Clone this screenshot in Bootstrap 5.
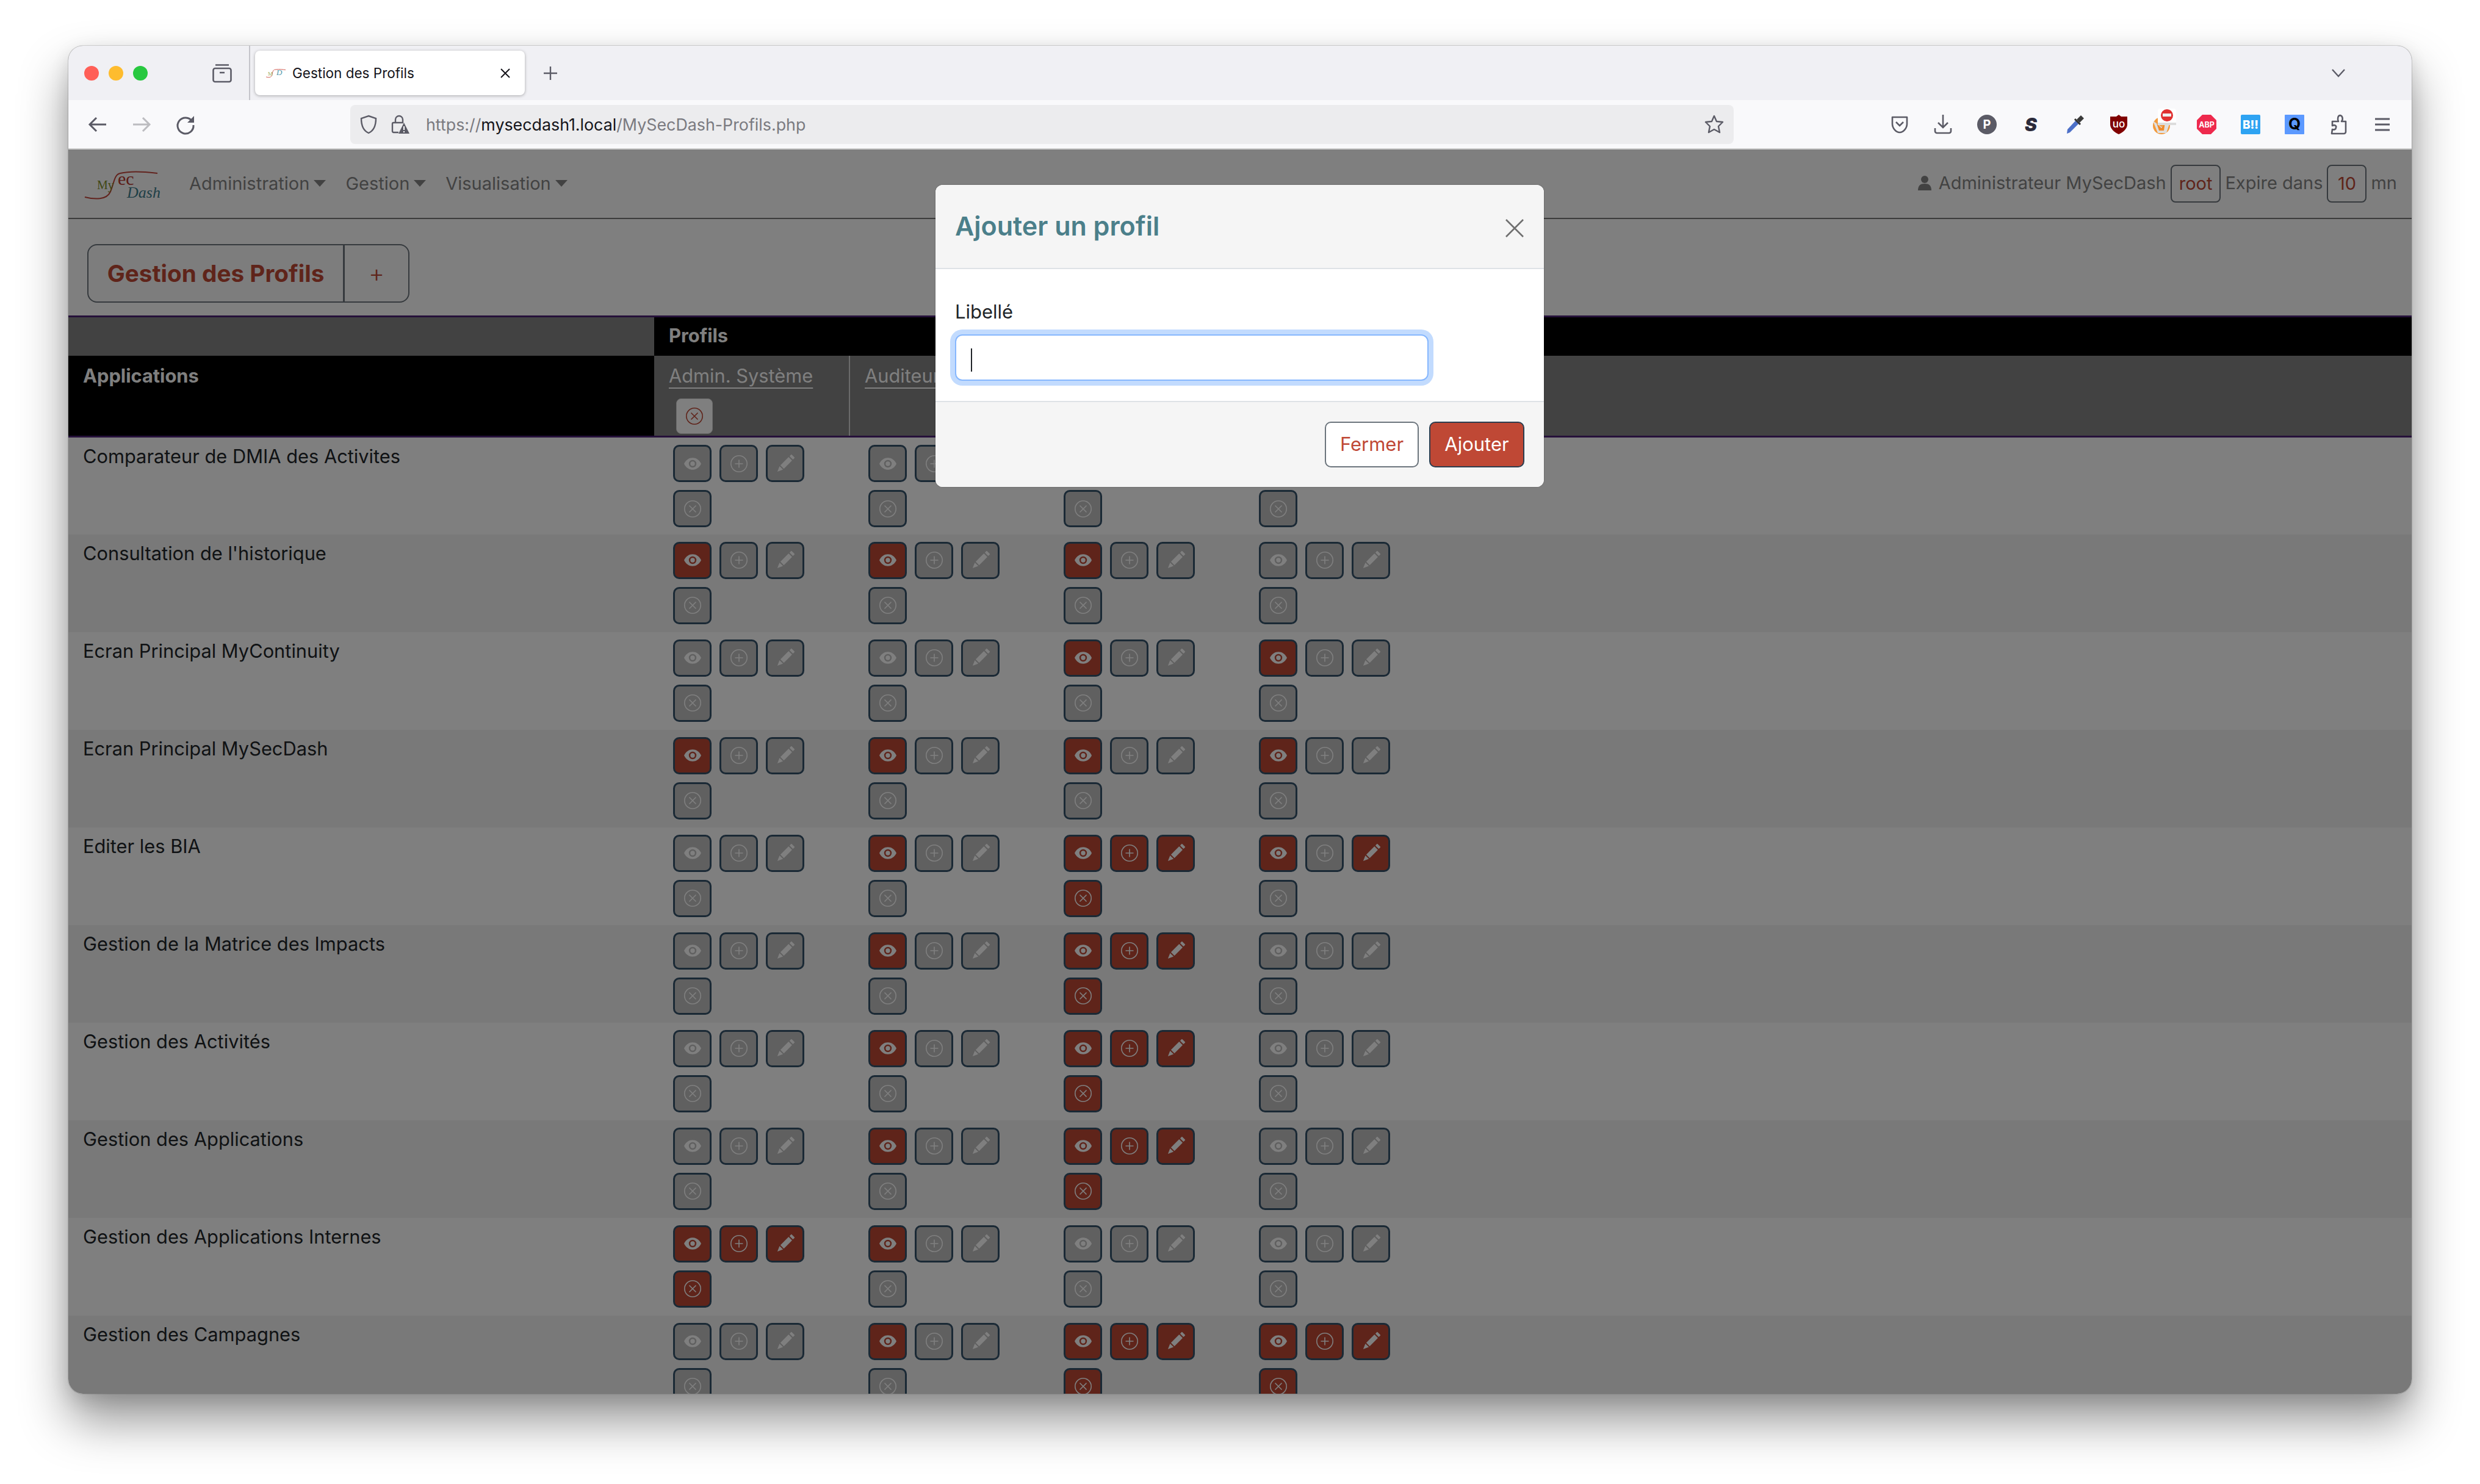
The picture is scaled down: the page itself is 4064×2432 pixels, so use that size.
<!DOCTYPE html>
<html lang="fr">
<head>
  <meta charset="UTF-8" />
  <title>Gestion des Profils</title>
  <link href="https://cdn.jsdelivr.net/npm/bootstrap@5.3.3/dist/css/bootstrap.min.css" rel="stylesheet" />
  <style>
    html, body { margin: 0; height: 2432px; overflow: hidden; background: #fff; font-family: Inter, "Liberation Sans", sans-serif; }
    svg { overflow: visible; }

    /* fenetre du navigateur */
    .fenetre { width: 3840px; height: 2209px; margin: 75px 0 0 112px; border-radius: 24px; overflow: hidden; background: #808080;
      box-shadow: 0 0 0 1px rgba(0,0,0,.14), 0 44px 80px rgba(0,0,0,.42), 0 10px 30px rgba(0,0,0,.12); }
    .barre-onglets { height: 89px; background: #f0f0f4; }
    .feu { width: 24px; height: 24px; border-radius: 50%; }
    .feu-rouge { background: #ff5f57; margin-left: 26px; }
    .feu-jaune { background: #febc2e; margin-left: 16px; }
    .feu-vert { background: #28c840; margin-left: 16px; }
    .ico-archive { margin-left: 106px; }
    .separateur { width: 2px; height: 89px; background: #c4c4ca; margin-left: 28px; }
    .onglet { width: 442px; height: 73px; margin-left: 8px; padding: 0 18px; background: #fff; border-radius: 8px; box-shadow: 0 1px 5px rgba(0,0,0,.3); font-size: 22.5px; color: #15141a; }
    .onglet-titre { margin-left: 11px; }
    .ico-nouvel { margin-left: 29px; }
    .ico-liste { margin-left: 2905px; }
    .barre-outils { height: 81px; background: #f9f9fb; border-bottom: 2px solid #ccc; padding: 0 32px; gap: 40px; }
    .zone-url { width: 2267px; height: 64px; margin-left: 214px; background: #ececee; border-radius: 8px; padding: 0 16px; font-size: 26.8px; color: #7a7a80; }
    .zone-url b { font-weight: 400; color: #15141a; }
    .zone-url svg + svg { margin-left: 23px; }
    .url-texte { margin-left: 27px; padding-top: 2px; }

    /* page */
    .page { position: relative; height: 2039px; overflow: hidden; background: #fff; font-size: 30.8px; line-height: 42px; color: #212529; }
    .voile { position: absolute; inset: 0; background: #000; opacity: .5; }
    .navbar.haut { height: 114px; padding: 0 24px 0 13px; background: #fff; border-bottom: 2px solid #787878; }
    .navbar-expand .navbar-nav .nav-link { padding: 0 16px; font-size: 29px; color: #858585; }
    .haut .navbar-nav { margin-left: 9px; }
    .haut .dropdown-toggle::after { margin-left: 7px; border-top-width: 11px; border-left-width: 10px; border-right-width: 10px; vertical-align: 5px; }
    .utilisateur { color: #858585; gap: 7px; margin-top: -2px; font-size: 29px; }
    .boite-info { height: 62px; min-width: 65px; padding: 0 12px; margin-top: 2px; border: 2px solid #6c757d; border-radius: 8px; color: #bf4835; display: flex; align-items: center; justify-content: center; }
    .entete-titre { padding: 41px 0 21px 31px; }
    .groupe-titre .btn { height: 96px; border: 2px solid #6c757d; border-radius: 16px; background: #fafafa; color: #bf4835; }
    .groupe-titre .btn-nom { width: 421px; font-size: 38.7px; font-weight: 700; padding: 0; }
    .groupe-titre .btn-plus { width: 108px; font-size: 40px; font-weight: 300; padding: 0; }

    /* tableau */
    .tableau { width: 3840px; table-layout: fixed; border-collapse: collapse; margin: 0; }
    .tableau th, .tableau td { vertical-align: top; font-weight: 400; padding: 0; }
    .tableau thead { border-top: 3px solid #4b2075; border-bottom: 3px solid #4b2075; color: #fff; }
    .col-app { width: 960px; }
    .col-profil { width: 320px; }
    .l1 th { height: 64px; background: #000; font-weight: 700; padding: 9px 24px 0; }
    .l1 th.vide { background: #848484; }
    .l2 th { height: 133px; background: #848484; padding: 12px 24px 0; }
    .l2 th.noir { background: #000; font-weight: 700; }
    .l2 th.sep { border-right: 2px solid #d6d6d6; }
    .l2 a { color: #fff; text-decoration: underline; text-underline-offset: 8px; text-decoration-thickness: 2px; }
    .suppr-profil { width: 60px; height: 58px; margin: 16px 0 0 12px; border-radius: 8px; background: #fff; border: 1px solid #d8d8d8; padding: 0; display: flex; align-items: center; justify-content: center; }
    .tableau tbody tr { height: 160px; background: #fff; }
    .tableau tbody tr:nth-child(even) { background: #f2f2f2; }
    .tableau td.nom-app { padding: 10px 24px; }
    .droits { width: 240px; margin: 12px 0 0 31px; display: flex; flex-wrap: wrap; gap: 13px; }
    .droit { width: 63px; height: 61px; padding: 0; border: 3px solid #35526a; border-radius: 10px; background: #c0c0c0; display: flex; align-items: center; justify-content: center; }
    .droit.actif { background: #bf4835; }

    /* fenetre modale */
    .boite-modale { position: absolute; left: 1421px; top: 58px; width: 997px; border: 0; border-radius: 12px; background: #fff; overflow: hidden; box-shadow: 0 0 2px rgba(0,0,0,.4); }
    .boite-modale .modal-header { height: 138px; padding: 0 24px 0 32px; background: #f5f5f5; border-bottom: 2px solid #dee2e6; }
    .boite-modale .modal-title { font-size: 43px; font-weight: 600; color: #4b7f8a; line-height: 1.2; }
    .fermeture { width: 32px; height: 32px; padding: 0; background: none; border: 0; margin: -10px 8px 0 0; }
    .boite-modale .modal-body { height: 216px; padding: 49px 32px 0; position: relative; }
    .boite-modale label { font-size: 31px; margin-bottom: 16px; display: block; line-height: 42px; }
    .saisie { width: 776px; height: 76px; border: 2px solid #86b7fe; border-radius: 12px; box-shadow: 0 0 0 8px #c2dbfe; }
    .curseur { position: absolute; left: 58px; top: 130px; width: 2px; height: 38px; background: #212529; }
    .boite-modale .modal-footer { height: 141px; padding: 0 32px; background: #f5f5f5; border-top: 2px solid #dee2e6; gap: 17px; }
    .boite-modale .modal-footer > .btn { margin: 0; height: 75px; font-size: 31px; border-radius: 10px; padding: 0; }
    .btn-fermer { width: 154px; background: #fff; color: #bf4835; border: 2px solid #6c757d; }
    .btn-ajouter { width: 156px; background: #bf4835; color: #fff; border: 2px solid #2c3e50; }
  </style>
</head>

<body>
<svg width="0" height="0" class="d-block">
  <symbol id="i-oeil" viewBox="0 0 32 32"><path fill="currentColor" fill-rule="evenodd" d="M2 16C8 3 24 3 30 16C24 29 8 29 2 16ZM16 9.800A6.200 6.200 0 1 0 16 22.200A6.200 6.200 0 1 0 16 9.800ZM16 12.300A3.700 3.700 0 1 1 16 19.700A3.700 3.700 0 1 1 16 12.300Z"/></symbol>
  <symbol id="i-plus" viewBox="0 0 32 32"><g fill="none" stroke="currentColor" stroke-width="1.600"><circle cx="16" cy="16" r="13.200"/><path d="M16 9.500V22.500M9.500 16H22.500"/></g></symbol>
  <symbol id="i-croix" viewBox="0 0 32 32"><g fill="none" stroke="currentColor" stroke-width="1.600"><circle cx="16" cy="16" r="13.200"/><path d="M10.500 10.500L21.500 21.500M21.500 10.500L10.500 21.500"/></g></symbol>
  <symbol id="i-crayon" viewBox="0 0 32 32"><g fill="currentColor" transform="rotate(45 16 16)"><rect x="12" y="-2" width="8" height="4.500" rx="1"/><rect x="12" y="4.500" width="8" height="19"/><path d="M12 25.500H20L16 34.500Z"/></g></symbol>
</svg>

<div class="fenetre d-flex flex-column">
  <div class="barre-onglets d-flex align-items-center">
    <span class="feu feu-rouge"></span><span class="feu feu-jaune"></span><span class="feu feu-vert"></span>
    <svg class="ico-archive" width="32" height="32" viewBox="0 0 32 32" fill="none" stroke="#5b5b66" stroke-width="2.600"><path d="M5 2.500H27"/><rect x="1.500" y="8" width="29" height="22" rx="3"/><path d="M12 15H20"/></svg>
    <span class="separateur"></span>
    <div class="onglet d-flex align-items-center">
      <svg width="32" height="16" viewBox="0 0 32 16"><path d="M0 14C5 15.500 9 15 10 10C11 4 12 2 16 2C22 1 27 2 32 2.500" fill="none" stroke="#d05a50" stroke-width="1"/><text x="3" y="12" font-family="Liberation Serif" font-size="9" fill="#a0b060">M</text><text x="17" y="11" font-family="Liberation Serif" font-style="italic" font-size="13" fill="#4f96a8">D</text></svg>
      <span class="onglet-titre">Gestion des Profils</span>
      <svg class="ms-auto me-1" width="20" height="20" viewBox="0 0 20 20" stroke="#15141a" stroke-width="2"><path d="M3 3L17 17M17 3L3 17"/></svg>
    </div>
    <svg class="ico-nouvel" width="26" height="26" viewBox="0 0 26 26" stroke="#5b5b66" stroke-width="2.400"><path d="M13 2V24M2 13H24"/></svg>
    <svg class="ico-liste" width="24" height="14" viewBox="0 0 24 14" fill="none" stroke="#5b5b66" stroke-width="2.400"><path d="M2 1L12 12L22 1"/></svg>
  </div>

  <div class="barre-outils d-flex align-items-center">
    <svg width="32" height="32" viewBox="0 0 32 32" fill="none" stroke="#5b5b66" stroke-width="3"><path d="M30 16H4M14 5L3 16L14 27"/></svg>
    <svg width="32" height="32" viewBox="0 0 32 32" fill="none" stroke="#bcbcc0" stroke-width="3"><path d="M2 16H28M18 5L29 16L18 27"/></svg>
    <svg width="32" height="32" viewBox="0 0 32 32" fill="none" stroke="#5b5b66" stroke-width="3"><path d="M27 11A13 13 0 1 0 29 17"/><path d="M30 2V13H19Z" fill="#5b5b66" stroke="none"/></svg>
    <div class="zone-url d-flex align-items-center">
      <svg width="28" height="32" viewBox="0 0 28 32" fill="none" stroke="#5b5b66" stroke-width="2.400"><path d="M14 2L26 6C26 18 23 26 14 30C5 26 2 18 2 6Z"/></svg>
      <svg width="30" height="32" viewBox="0 0 30 32"><g fill="none" stroke="#5b5b66" stroke-width="2.400"><path d="M7 13V8A6 6 0 0 1 19 8V13"/><path d="M12 29H4A2 2 0 0 1 2 27V15A2 2 0 0 1 4 13H20"/></g><path d="M21 13L30 31H12Z" fill="#5b5b66"/><path d="M21 19V25M21 27V29" stroke="#fff" stroke-width="2"/></svg>
      <span class="url-texte">https://<b>mysecdash1.local</b>/MySecDash-Profils.php</span>
      <svg class="ms-auto" width="32" height="32" viewBox="0 0 32 32" fill="none" stroke="#5b5b66" stroke-width="2.400"><path d="M16 2L20 11L30 12L23 19L25 29L16 24L7 29L9 19L2 12L12 11Z" stroke-linejoin="round"/></svg>
    </div>
    <svg class="ms-auto" width="30" height="32" viewBox="0 0 30 32" fill="none" stroke="#5b5b66" stroke-width="2.600"><path d="M3 4H27V15C27 22 21 29 15 29C9 29 3 22 3 15Z" stroke-linejoin="round"/><path d="M9 12L15 18L21 12"/></svg>
    <svg width="32" height="32" viewBox="0 0 32 32" fill="none" stroke="#5b5b66" stroke-width="2.600"><path d="M16 0V21M8 13L16 21L24 13"/><path d="M3 22V27A3 3 0 0 0 6 30H26A3 3 0 0 0 29 27V22"/></svg>
    <svg width="32" height="32" viewBox="0 0 32 32"><circle cx="16" cy="16" r="16" fill="#5b5b66"/><text x="16" y="23" text-anchor="middle" font-family="Inter" font-weight="700" font-size="20" fill="#fff">P</text></svg>
    <svg width="32" height="32" viewBox="0 0 32 32"><text x="16" y="27" text-anchor="middle" font-family="Inter" font-style="italic" font-weight="900" font-size="30" fill="#2b2a3a">S</text></svg>
    <svg width="32" height="32" viewBox="0 0 32 32"><path d="M26 1L31 6L24 13L19 8Z" fill="#3a3a3a"/><path d="M18 9L23 14L8 29L3 31L4 24Z" fill="#4d70c8"/><path d="M16 7L25 16" stroke="#333" stroke-width="3"/></svg>
    <svg width="32" height="32" viewBox="0 0 32 32"><path d="M16 0L20 3H30V16C30 23 23 29 16 32C9 29 2 23 2 16V3H12Z" fill="#800000"/><text x="16" y="21" text-anchor="middle" font-family="Inter" font-weight="500" font-size="17" fill="#fff">uo</text></svg>
    <svg width="32" height="32" viewBox="0 0 32 32"><circle cx="14" cy="18" r="14" fill="#f39a3c"/><path d="M0 10L14 20L28 12L22 30H8Z" fill="#e0e0e0"/><path d="M6 14L14 22L20 12L18 26H10Z" fill="#ef8a2a"/><rect x="8" y="-10" width="30" height="26" rx="4" fill="#fff"/><rect x="8" y="13" width="30" height="4" fill="#ddd"/><circle cx="23" cy="1" r="10" fill="#e03030"/><rect x="16" y="-2" width="14" height="5" fill="#eee"/></svg>
    <svg width="32" height="32" viewBox="0 0 32 32"><path d="M9 0H23L32 9V23L23 32H9L0 23V9Z" fill="#ee2a4d"/><text x="16" y="21" text-anchor="middle" font-family="Inter" font-weight="700" font-size="12.500" fill="#fff">ABP</text></svg>
    <svg width="32" height="32" viewBox="0 0 32 32"><rect width="32" height="32" rx="2" fill="#2ea3f2"/><text x="16" y="23" text-anchor="middle" font-family="Inter" font-weight="800" font-size="19" fill="#fff">B!!</text></svg>
    <svg width="32" height="32" viewBox="0 0 32 32"><rect width="32" height="32" rx="1" fill="#5c99ff"/><text x="16" y="24" text-anchor="middle" font-family="Inter" font-weight="700" font-size="26" fill="#000">Q</text></svg>
    <svg width="32" height="32" viewBox="0 0 32 32" fill="none" stroke="#5b5b66" stroke-width="2.600"><path d="M5 31H25A3 3 0 0 0 28 28V11H21C24 8 23 2 19 1C15 1 14 7 16 11H6V18C10 16 13 18 12 21C12 24 9 25 6 24Z" stroke-linejoin="round"/></svg>
    <svg width="32" height="32" viewBox="0 0 32 32" fill="none" stroke="#5b5b66" stroke-width="3"><path d="M4 7H28M4 16H28M4 25H28"/></svg>
  </div>

  <div class="page">
    <nav class="navbar navbar-expand haut">
      <svg width="160" height="80" viewBox="0 -3 160 80">
        <path d="M14 59C30 63 50 64 56 50C62 36 62 22 72 20C88 16 110 17 133 20" fill="none" stroke="#c4463c" stroke-width="2"/>
        <text x="34" y="46" font-family="Liberation Serif" font-size="20" fill="#7f8f2a">My</text>
        <text x="68" y="39" font-family="Liberation Serif" font-size="30" fill="#b8382e">ec</text>
        <text x="83" y="60" font-family="Liberation Serif" font-style="italic" font-size="26" fill="#3f7f8e">Dash</text>
      </svg>
      <ul class="navbar-nav">
        <li class="nav-item dropdown"><a class="nav-link dropdown-toggle" href="#">Administration</a></li>
        <li class="nav-item dropdown"><a class="nav-link dropdown-toggle" href="#">Gestion</a></li>
        <li class="nav-item dropdown"><a class="nav-link dropdown-toggle" href="#">Visualisation</a></li>
      </ul>
      <div class="utilisateur d-flex align-items-center ms-auto">
        <svg width="24" height="26" viewBox="0 0 24 26" class="me-1"><circle cx="12" cy="7" r="6" fill="#858585"/><path d="M1 25C1 17 5 14 12 14C19 14 23 17 23 25Z" fill="#858585"/></svg>
        <span>Administrateur MySecDash</span>
        <span class="boite-info">root</span>
        <span>Expire dans</span>
        <span class="boite-info">10</span>
        <span>mn</span>
      </div>
    </nav>

    <div class="entete-titre">
      <div class="btn-group groupe-titre" role="group">
        <button class="btn btn-nom">Gestion des Profils</button>
        <button class="btn btn-plus">+</button>
      </div>
    </div>

    <table class="tableau">
      <colgroup><col class="col-app"><col class="col-profil"><col class="col-profil"><col class="col-profil"><col class="col-profil"><col></colgroup>
      <thead>
        <tr class="l1"><th class="vide"></th><th colspan="5">Profils</th></tr>
        <tr class="l2">
          <th class="noir">Applications</th>
          <th class="sep"><a href="#">Admin. Système</a><button class="suppr-profil"><svg width="32" height="32" color="#bf4835"><use href="#i-croix"/></svg></button></th>
          <th class="sep"><a href="#">Auditeur</a></th>
          <th class="sep"></th>
          <th class="sep"></th>
          <th></th>
        </tr>
      </thead>
      <tbody id="lignes"></tbody>
    </table>

    <div class="voile"></div>

    <div class="modal-content boite-modale">
      <div class="modal-header">
        <h5 class="modal-title">Ajouter un profil</h5>
        <button class="fermeture ms-auto"><svg width="32" height="32" viewBox="0 0 32 32" stroke="#6f6f6f" stroke-width="2.600"><path d="M2 2L30 30M30 2L2 30"/></svg></button>
      </div>
      <div class="modal-body">
        <label for="libelle">Libellé</label>
        <input id="libelle" class="form-control saisie" type="text" />
        <span class="curseur"></span>
      </div>
      <div class="modal-footer">
        <button class="btn btn-fermer">Fermer</button>
        <button class="btn btn-ajouter">Ajouter</button>
      </div>
    </div>
  </div>
</div>

<script>
  // V = voir, A = ajouter, M = modifier, S = supprimer, une chaine par profil
  const applications = [
    ["Comparateur de DMIA des Activites", "", "", "", ""],
    ["Consultation de l'historique", "V", "V", "V", ""],
    ["Ecran Principal MyContinuity", "", "", "V", "V"],
    ["Ecran Principal MySecDash", "V", "V", "V", "V"],
    ["Editer les BIA", "", "V", "VAMS", "VM"],
    ["Gestion de la Matrice des Impacts", "", "V", "VAMS", ""],
    ["Gestion des Activités", "", "V", "VAMS", ""],
    ["Gestion des Applications", "", "V", "VAMS", ""],
    ["Gestion des Applications Internes", "VAMS", "V", "", ""],
    ["Gestion des Campagnes", "", "V", "VAMS", "VAMS"]
  ];
  const icones = { V: "i-oeil", A: "i-plus", M: "i-crayon", S: "i-croix" };

  function boutons(droits) {
    let html = "";
    for (const d of "VAMS") {
      const actif = droits.includes(d) ? " actif" : "";
      html += `<button class="droit${actif}"><svg width="32" height="32" color="#fff"><use href="#${icones[d]}"/></svg></button>`;
    }
    return `<div class="droits">${html}</div>`;
  }

  const tbody = document.getElementById("lignes");
  applications.forEach(app => {
    const row = document.createElement("tr");
    row.innerHTML = `<td class="nom-app">${app[0]}</td>` +
      app.slice(1).map(d => `<td>${boutons(d)}</td>`).join("") + "<td></td>";
    tbody.appendChild(row);
  });
</script>
<script src="https://cdn.jsdelivr.net/npm/bootstrap@5.3.3/dist/js/bootstrap.bundle.min.js"></script>
</body>
</html>
